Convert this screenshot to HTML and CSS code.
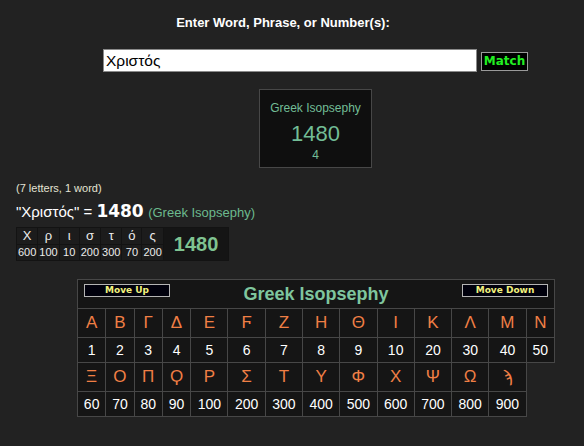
FILE: index.html
```html
<!DOCTYPE html>
<html>
<head>
<meta charset="utf-8">
<link rel="stylesheet" href="styles.css">
</head>
<body>
<div class="prompt">Enter Word, Phrase, or Number(s):</div>
<div class="form-row">
  <input class="word" type="text" value="Χριστός">
  <button class="match">Match</button>
</div>
<div class="box-wrap">
  <div class="cipher-box">
    <div class="cb-title">Greek Isopsephy</div>
    <div class="cb-num">1480</div>
    <div class="cb-count">4</div>
  </div>
</div>
<div class="counts">(7 letters, 1 word)</div>
<div class="sum-line"><span class="phrase">"Χριστός" = </span><span class="sum-val">1480</span> <span class="sum-name">(Greek Isopsephy)</span></div>
<table class="breakdown">
  <tr class="bl">
    <td>Χ</td><td>ρ</td><td>ι</td><td>σ</td><td>τ</td><td>ό</td><td>ς</td>
    <td class="total" rowspan="2">1480</td>
  </tr>
  <tr class="bn">
    <td>600</td><td>100</td><td>10</td><td>200</td><td>300</td><td>70</td><td>200</td>
  </tr>
</table>
<table class="chart">
  <tr>
    <td class="head" colspan="14">
      <div class="head-inner">
        <button class="mv">Move Up</button>
        <span class="chart-title">Greek Isopsephy</span>
        <button class="mv">Move Down</button>
      </div>
    </td>
  </tr>
  <tr class="lt">
    <td>Α</td><td>Β</td><td>Γ</td><td>Δ</td><td>Ε</td><td>Ϝ</td><td>Ζ</td><td>Η</td><td>Θ</td><td>Ι</td><td>Κ</td><td>Λ</td><td>Μ</td><td>Ν</td>
  </tr>
  <tr class="nm">
    <td>1</td><td>2</td><td>3</td><td>4</td><td>5</td><td>6</td><td>7</td><td>8</td><td>9</td><td>10</td><td>20</td><td>30</td><td>40</td><td>50</td>
  </tr>
  <tr class="lt">
    <td>Ξ</td><td>Ο</td><td>Π</td><td>Ϙ</td><td>Ρ</td><td>Σ</td><td>Τ</td><td>Υ</td><td>Φ</td><td>Χ</td><td>Ψ</td><td>Ω</td><td>ϡ</td>
  </tr>
  <tr class="nm">
    <td>60</td><td>70</td><td>80</td><td>90</td><td>100</td><td>200</td><td>300</td><td>400</td><td>500</td><td>600</td><td>700</td><td>800</td><td>900</td>
  </tr>
</table>
</body>
</html>
```

FILE: styles.css
```css
html, body {
  margin: 0;
  padding: 0;
  background: #222222;
  overflow: hidden;
}
body {
  font-family: "Liberation Sans", Arial, "DejaVu Sans", sans-serif;
  color: #ffffff;
  height: 446px;
}
.prompt {
  padding-top: 15px;
  margin-right: 18px;
  text-align: center;
  font-size: 13px;
  line-height: 15px;
  font-weight: bold;
  color: #ffffff;
}
.form-row {
  display: flex;
  align-items: flex-start;
  gap: 4px;
  margin: 19px 0 0 103px;
}
.word {
  box-sizing: border-box;
  width: 374px;
  height: 23px;
  margin: 0;
  padding: 0 2px;
  border: 1px solid #8a8a8a;
  background: #ffffff;
  color: #000000;
  font-family: "Liberation Sans", Arial, sans-serif;
  font-size: 15.5px;
  outline: none;
}
.match {
  box-sizing: border-box;
  width: 47px;
  height: 19px;
  margin: 3px 0 0 0;
  padding: 0;
  border: 1px solid #9a9a9a;
  background: #000000;
  color: #22ee22;
  font-family: "DejaVu Sans", Verdana, sans-serif;
  font-weight: bold;
  font-size: 12px;
  line-height: 17px;
}
.box-wrap {
  padding: 17px 0 0 259px;
}
.cipher-box {
  box-sizing: border-box;
  width: 113px;
  height: 79px;
  border: 1px solid #474747;
  background: #0f0f0f;
  padding-top: 11px;
  text-align: center;
  color: #72bd96;
}
.cb-title {
  font-size: 12px;
  line-height: 14px;
}
.cb-num {
  font-size: 22px;
  line-height: 25px;
  margin-top: 6px;
}
.cb-count {
  font-size: 12px;
  line-height: 14px;
  margin-top: 2px;
}
.counts {
  margin: 14px 0 0 16px;
  font-size: 11px;
  line-height: 13px;
  color: #e4e4d4;
}
.sum-line {
  margin: 5px 0 0 16px;
  line-height: 22px;
  height: 22px;
}
.phrase {
  font-size: 15px;
  color: #ffffff;
}
.sum-val {
  font-family: "DejaVu Sans", Verdana, sans-serif;
  font-weight: bold;
  font-size: 17px;
  color: #ffffff;
}
.sum-name {
  font-size: 13px;
  color: #6cba8e;
}
.breakdown {
  margin: 5px 0 0 16px;
  border-collapse: separate;
  border-spacing: 1px;
  background: #131313;
}
.breakdown td {
  background: #1c1c1c;
  text-align: center;
  padding: 0 1px;
  min-width: 17px;
  color: #ececec;
}
.bl td {
  font-size: 13px;
  line-height: 16px;
}
.bn td {
  font-size: 11px;
  line-height: 15px;
}
.breakdown td.total {
  background: #151515;
  padding: 0 10px;
  font-size: 20px;
  font-weight: bold;
  color: #7fc391;
}
.chart {
  margin: 18px 0 0 77px;
  width: 478px;
  border-collapse: collapse;
}
.chart td {
  border: 1px solid #474747;
  background: #151515;
  text-align: center;
  padding: 4px;
}
.chart td.head {
  padding: 4px 6px 3px 6px;
}
.head-inner {
  display: flex;
  justify-content: space-between;
  align-items: flex-start;
}
.mv {
  box-sizing: border-box;
  width: 86px;
  height: 13px;
  margin: 0;
  padding: 0;
  border: 1px solid #b4b4b4;
  background: #00000c;
  color: #f2f27e;
  font-family: "DejaVu Sans", Verdana, sans-serif;
  font-weight: bold;
  font-size: 9px;
  line-height: 11px;
}
.chart-title {
  font-size: 18px;
  line-height: 21px;
  font-weight: bold;
  color: #7fc69e;
}
.lt td {
  font-size: 17px;
  line-height: 20px;
  color: #f07f45;
}
.nm td {
  font-size: 14px;
  line-height: 16px;
  color: #ffffff;
}
```
